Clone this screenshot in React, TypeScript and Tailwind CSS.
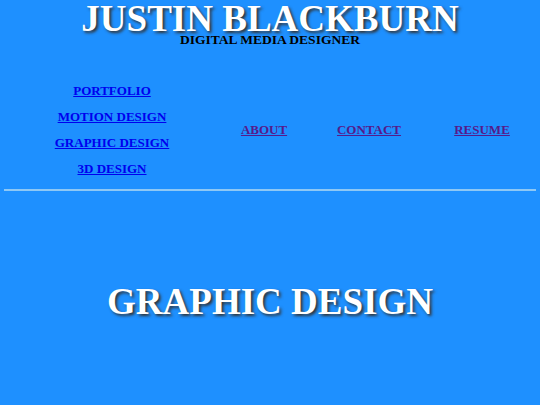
export default function App() {
  return (
    <div className="min-h-[405px] w-full bg-[#1e90ff] font-['Liberation_Serif',serif] font-bold">
      <header className="flex flex-col items-center pt-[1px]">
        <h1 className="text-[37px] leading-[36px] text-white [text-shadow:2px_2px_3px_#333]">
          JUSTIN BLACKBURN
        </h1>
        <p className="-mt-[4px] text-[13.5px] leading-[14px] text-black">DIGITAL MEDIA DESIGNER</p>
      </header>

      <nav className="mt-[36px] flex items-center text-[13px] leading-[15px]">
        <ul className="flex w-[224px] flex-col items-center gap-[11px]">
          <li><a href="#" className="text-[#0000ee] underline">PORTFOLIO</a></li>
          <li><a href="#" className="text-[#0000ee] underline">MOTION DESIGN</a></li>
          <li><a href="#" className="text-[#0000ee] underline">GRAPHIC DESIGN</a></li>
          <li><a href="#" className="text-[#0000ee] underline">3D DESIGN</a></li>
        </ul>
        <div className="flex w-[80px] justify-center">
          <a href="#" className="text-[#551a8b] underline">ABOUT</a>
        </div>
        <div className="flex w-[130px] justify-center">
          <a href="#" className="text-[#551a8b] underline">CONTACT</a>
        </div>
        <div className="flex w-[96px] justify-center">
          <a href="#" className="text-[#551a8b] underline">RESUME</a>
        </div>
      </nav>

      <hr className="mx-[4px] mt-[13px] border-t-2 border-[#8ec8f5]" />

      <h2 className="mt-[93px] text-center text-[37px] leading-[36px] text-white [text-shadow:2px_2px_3px_#333]">
        GRAPHIC DESIGN
      </h2>
    </div>
  );
}
